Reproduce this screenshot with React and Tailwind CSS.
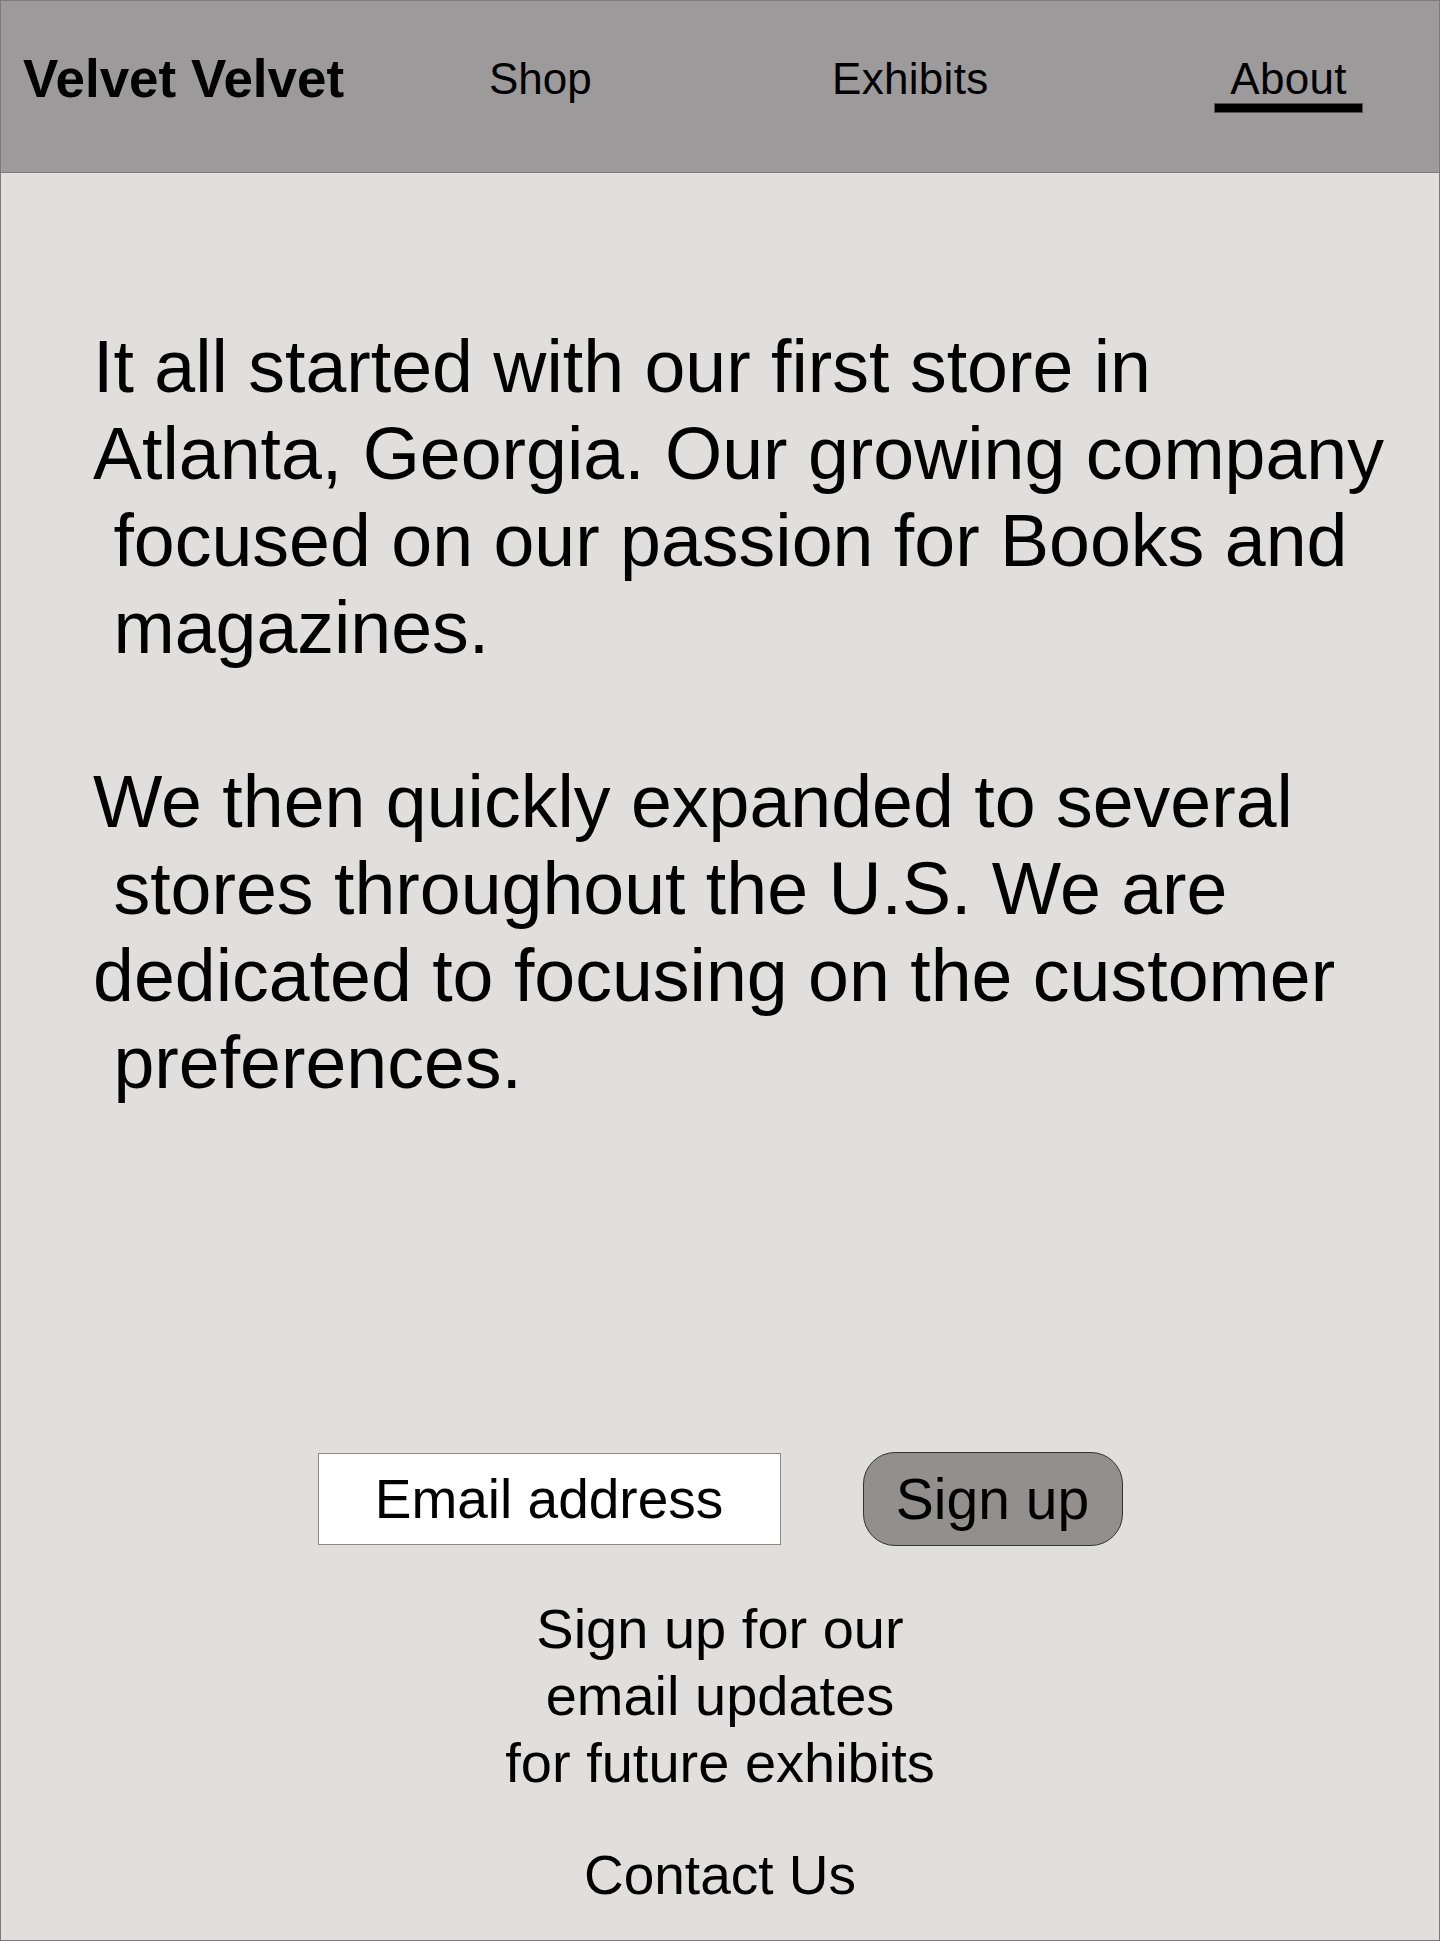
export default function App() {
  const font = { fontFamily: '"Liberation Sans", Arial, Helvetica, sans-serif' };
  return (
    <div
      className="w-[1440px] h-[1941px] border border-[#7b7b7b] bg-[#e0dfde] text-black flex flex-col overflow-hidden"
      style={font}
    >
      {/* header */}
      <header className="h-[172px] shrink-0 bg-[#9c9a9b] border-b border-[#7b7b7b] grid grid-cols-[466px_343px_382px_149px] pl-[22px]">
        <div className="pt-[51px] text-[53px] leading-[53px] font-bold whitespace-nowrap">Velvet Velvet</div>
        <div className="pt-[56px] text-[44px] leading-[44px]">Shop</div>
        <div className="pt-[56px] text-[44px] leading-[44px] tracking-[0.3px]">Exhibits</div>
        <div className="pt-[56px] flex flex-col items-center">
          <span className="text-[44px] leading-[44px] tracking-[0.3px]">About</span>
          <span className="mt-[2px] h-[10px] w-full bg-black border border-[#555]" />
        </div>
      </header>

      {/* story */}
      <main className="pl-[92px] pt-[150px] text-[73.5px] leading-[87px] whitespace-pre">
        <div>It all started with our first store in</div>
        <div>Atlanta, Georgia. Our growing company</div>
        <div> focused on our passion for Books and</div>
        <div> magazines.</div>
        <div className="h-[87px]" />
        <div>We then quickly expanded to several</div>
        <div> stores throughout the U.S. We are</div>
        <div>dedicated to focusing on the customer</div>
        <div> preferences.</div>
      </main>

      {/* sign up */}
      <div className="mt-[346px] flex items-center justify-center gap-[82px]">
        <input
          type="email"
          placeholder="Email address"
          className="w-[463px] h-[92px] border border-[#8a8a8a] bg-white text-center text-[55px] placeholder:text-black outline-none"
          style={font}
        />
        <button
          className="w-[260px] h-[94px] rounded-[32px] border border-[#333] bg-[#948f8f] text-[57px] leading-none text-black"
          style={font}
        >
          Sign up
        </button>
      </div>

      <div className="mt-[49px] text-center text-[56px] leading-[67px]">
        <div>Sign up for our</div>
        <div>email updates</div>
        <div>for future exhibits</div>
      </div>

      <div className="mt-[46px] text-center text-[55px] leading-[67px]">Contact Us</div>
    </div>
  );
}
